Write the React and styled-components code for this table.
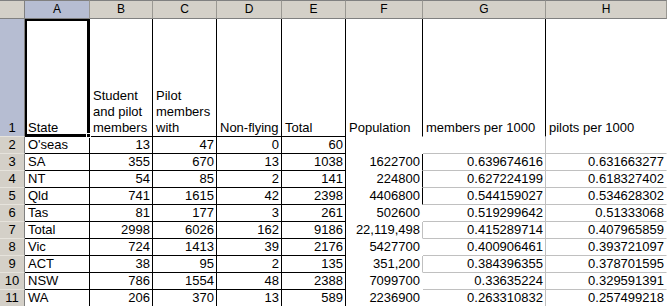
import styled, { createGlobalStyle } from 'styled-components';

const GlobalStyle = createGlobalStyle`
  html, body {
    margin: 0;
    padding: 0;
    background: #fff;
  }
  body {
    font-family: 'Liberation Sans', Arial, sans-serif;
    font-size: 13px;
    color: #000;
  }
`;

const BLACK = '#000';
const GREY = '#c0c0c0';

const columns = ['A', 'B', 'C', 'D', 'E', 'F', 'G', 'H'];

const headings = [
  'State',
  'Student and pilot members',
  'Pilot members with',
  'Non-flying',
  'Total',
  'Population',
  'members per 1000',
  'pilots per 1000',
];

const rows = [
  ["O'seas", '13', '47', '0', '60', '', '', ''],
  ['SA', '355', '670', '13', '1038', '1622700', '0.639674616', '0.631663277'],
  ['NT', '54', '85', '2', '141', '224800', '0.627224199', '0.618327402'],
  ['Qld', '741', '1615', '42', '2398', '4406800', '0.544159027', '0.534628302'],
  ['Tas', '81', '177', '3', '261', '502600', '0.519299642', '0.51333068'],
  ['Total', '2998', '6026', '162', '9186', '22,119,498', '0.415289714', '0.407965859'],
  ['Vic', '724', '1413', '39', '2176', '5427700', '0.400906461', '0.393721097'],
  ['ACT', '38', '95', '2', '135', '351,200', '0.384396355', '0.378701595'],
  ['NSW', '786', '1554', '48', '2388', '7099700', '0.33635224', '0.329591391'],
  ['WA', '206', '370', '13', '589', '2236900', '0.263310832', '0.257499218'],
];

// which border each data cell draws on its right and bottom edge
function dataBorders(r, c) {
  if (c <= 4) return { right: BLACK, bottom: BLACK };
  if (c === 5) {
    if (r >= 1 && r <= 3) return { right: BLACK };
    if (r === 5 || r === 7) return { right: GREY };
    return {};
  }
  if (c === 6) return { right: GREY, bottom: GREY };
  return { bottom: GREY };
}

function headBorders(c) {
  if (c <= 4) return { right: BLACK, bottom: BLACK };
  if (c <= 6) return { right: BLACK };
  return {};
}

export default function App() {
  return (
    <>
      <GlobalStyle />
      <Sheet>
        <Corner />
        {columns.map((col) => (
          <ColHeader key={col} $selected={col === 'A'}>
            {col}
          </ColHeader>
        ))}

        <RowHeader $selected>1</RowHeader>
        {headings.map((h, c) => {
          const b = headBorders(c);
          return (
            <Cell key={h} $right={b.right} $bottom={b.bottom}>
              {h}
            </Cell>
          );
        })}

        {rows.map((row, r) => (
          <Row key={r} row={row} r={r} />
        ))}

        <Selection>
          <FillHandle />
        </Selection>
      </Sheet>
    </>
  );
}

function Row({ row, r }) {
  return (
    <>
      <RowHeader>{r + 2}</RowHeader>
      {row.map((v, c) => {
        const b = dataBorders(r, c);
        return (
          <Cell
            key={c}
            $num={c > 0}
            $right={b.right}
            $bottom={b.bottom}
          >
            {v}
          </Cell>
        );
      })}
    </>
  );
}

const Sheet = styled.div`
  position: relative;
  display: grid;
  grid-template-columns: 25px 65px 63px 64px 65px 64px 77px 123px 1fr;
  grid-template-rows: 19px 118px repeat(10, 17px);
  width: 667px;
  height: 306px;
  overflow: hidden;
`;

const Corner = styled.div`
  background: #d4d0c8;
  border-top: 1px solid #808080;
  border-right: 1px solid #808080;
  border-bottom: 1px solid #808080;
  box-sizing: border-box;
`;

const ColHeader = styled.div`
  box-sizing: border-box;
  display: flex;
  align-items: center;
  justify-content: center;
  background: ${(p) => (p.$selected ? '#b6bdd2' : '#d4d0c8')};
  border-top: 1px solid #808080;
  border-bottom: 1px solid #808080;
  border-right: 1px solid #9a9892;
  font-size: 12px;
  line-height: 17px;
  color: #000;
`;

const RowHeader = styled.div`
  box-sizing: border-box;
  display: flex;
  align-items: flex-end;
  justify-content: center;
  background: ${(p) => (p.$selected ? '#b6bdd2' : '#d4d0c8')};
  border-right: 1px solid #808080;
  border-bottom: 1px solid #e6e3dc;
  font-size: 13px;
  line-height: 16px;
  color: #000;
`;

const Cell = styled.div`
  box-sizing: border-box;
  display: flex;
  align-items: flex-end;
  justify-content: ${(p) => (p.$num ? 'flex-end' : 'flex-start')};
  padding: 0 2px 0 3px;
  background: #fff;
  border-right: 1px solid ${(p) => p.$right || 'transparent'};
  border-bottom: 1px solid ${(p) => p.$bottom || 'transparent'};
  font-size: 13px;
  line-height: 16px;
  white-space: ${(p) => (p.$num ? 'nowrap' : 'normal')};
  overflow: hidden;
`;

const Selection = styled.div`
  position: absolute;
  left: 25px;
  top: 19px;
  width: 64px;
  height: 117px;
  box-sizing: border-box;
  border: 2px solid #000;
  pointer-events: none;
`;

const FillHandle = styled.div`
  position: absolute;
  right: -4px;
  bottom: -4px;
  width: 5px;
  height: 5px;
  box-sizing: border-box;
  background: #000;
  border: 1px solid #fff;
`;
